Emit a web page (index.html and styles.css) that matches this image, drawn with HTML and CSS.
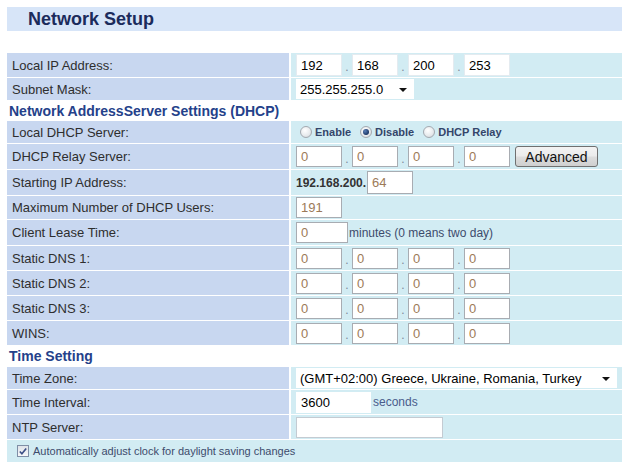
FILE: index.html
```html
<!DOCTYPE html>
<html>
<head>
<meta charset="utf-8">
<link rel="stylesheet" href="styles.css">
</head>
<body>
<div class="page">
  <div class="titlebar"><h1 class="title">Network Setup</h1></div>

  <div class="form">
    <div class="row r24">
      <div class="lbl">Local IP Address:</div>
      <div class="val">
        <input class="box oct" value="192"><span class="dot">.</span><input class="box oct" value="168"><span class="dot">.</span><input class="box oct" value="200"><span class="dot">.</span><input class="box oct" value="253">
      </div>
    </div>
    <div class="row r22">
      <div class="lbl">Subnet Mask:</div>
      <div class="val">
        <div class="select mask"><span>255.255.255.0</span><span class="arrow"></span></div>
      </div>
    </div>

    <div class="heading h21">Network AddressServer Settings (DHCP)</div>

    <div class="row r22">
      <div class="lbl">Local DHCP Server:</div>
      <div class="val radios">
        <span class="radio first"></span><span class="rtxt">Enable</span>
        <span class="radio on"></span><span class="rtxt">Disable</span>
        <span class="radio"></span><span class="rtxt">DHCP Relay</span>
      </div>
    </div>
    <div class="row r25">
      <div class="lbl">DHCP Relay Server:</div>
      <div class="val">
        <input class="box oct dis" value="0"><span class="dot">.</span><input class="box oct dis" value="0"><span class="dot">.</span><input class="box oct dis" value="0"><span class="dot">.</span><input class="box oct dis" value="0">
        <button class="btn">Advanced</button>
      </div>
    </div>
    <div class="row r25">
      <div class="lbl">Starting IP Address:</div>
      <div class="val">
        <span class="prefix">192.168.200.</span><input class="box oct dis tall" value="64">
      </div>
    </div>
    <div class="row r23">
      <div class="lbl">Maximum Number of DHCP Users:</div>
      <div class="val"><input class="box oct dis" value="191"></div>
    </div>
    <div class="row r25">
      <div class="lbl">Client Lease Time:</div>
      <div class="val"><input class="box lease dis" value="0"><span class="note">minutes (0 means two day)</span></div>
    </div>
    <div class="row r24">
      <div class="lbl">Static DNS 1:</div>
      <div class="val">
        <input class="box oct dis" value="0"><span class="dot">.</span><input class="box oct dis" value="0"><span class="dot">.</span><input class="box oct dis" value="0"><span class="dot">.</span><input class="box oct dis" value="0">
      </div>
    </div>
    <div class="row r24">
      <div class="lbl">Static DNS 2:</div>
      <div class="val">
        <input class="box oct dis" value="0"><span class="dot">.</span><input class="box oct dis" value="0"><span class="dot">.</span><input class="box oct dis" value="0"><span class="dot">.</span><input class="box oct dis" value="0">
      </div>
    </div>
    <div class="row r24">
      <div class="lbl">Static DNS 3:</div>
      <div class="val">
        <input class="box oct dis" value="0"><span class="dot">.</span><input class="box oct dis" value="0"><span class="dot">.</span><input class="box oct dis" value="0"><span class="dot">.</span><input class="box oct dis" value="0">
      </div>
    </div>
    <div class="row r24">
      <div class="lbl">WINS:</div>
      <div class="val">
        <input class="box oct dis" value="0"><span class="dot">.</span><input class="box oct dis" value="0"><span class="dot">.</span><input class="box oct dis" value="0"><span class="dot">.</span><input class="box oct dis" value="0">
      </div>
    </div>

    <div class="heading h22">Time Setting</div>

    <div class="row r22">
      <div class="lbl">Time Zone:</div>
      <div class="val">
        <div class="select tz"><span>(GMT+02:00) Greece, Ukraine, Romania, Turkey</span><span class="arrow"></span></div>
      </div>
    </div>
    <div class="row r24">
      <div class="lbl">Time Interval:</div>
      <div class="val"><input class="box interval" value="3600"><span class="note sec">seconds</span></div>
    </div>
    <div class="row r24">
      <div class="lbl">NTP Server:</div>
      <div class="val"><input class="box ntp" value=""></div>
    </div>
    <div class="full r22">
      <span class="check"><svg width="11" height="11" viewBox="0 0 11 11"><path d="M2 5.5 L4.3 8 L9 2.3" fill="none" stroke="#3d4f86" stroke-width="1.8"/></svg></span>
      <span class="ctxt">Automatically adjust clock for daylight saving changes</span>
    </div>
  </div>
</div>
</body>
</html>
```

FILE: styles.css
```css
* { box-sizing: border-box; }
html, body { margin: 0; padding: 0; background: #ffffff; }
body { font-family: "Liberation Sans", Arial, sans-serif; font-size: 13px; color: #303030; }

.page { padding: 7px 3px 0 7px; width: 625px; }

.titlebar {
  height: 24px;
  background: #d7e5f8;
  display: flex;
  align-items: center;
  padding-left: 21px;
}
.title {
  margin: 0;
  font-size: 18px;
  font-weight: bold;
  color: #1b2b5c;
  line-height: 24px;
}

.form { margin-top: 22px; display: flex; flex-direction: column; }

.row {
  display: grid;
  grid-template-columns: 282px 1fr;
  column-gap: 2px;
  margin-bottom: 1px;
}
.r21 { height: 21px; }
.r22 { height: 22px; }
.r23 { height: 23px; }
.r24 { height: 24px; }
.r25 { height: 25px; }
.h21 { height: 21px; }
.h22 { height: 22px; }

.lbl {
  background: #c8d7f0;
  padding-left: 5px;
  display: flex;
  align-items: center;
  font-size: 13px;
  color: #2e2e2e;
}
.val {
  background: #d2ecf3;
  padding-left: 5px;
  display: flex;
  align-items: center;
}

.heading {
  font-size: 14px;
  font-weight: bold;
  color: #24418a;
  padding-left: 2px;
  display: flex;
  align-items: center;
  margin-top: -1px;
}

.box {
  font-family: "Liberation Sans", Arial, sans-serif;
  font-size: 13px;
  color: #000;
  background: #fff;
  border: 1px solid #e4ebf0;
  height: 22px;
  padding: 0 0 0 4px;
  margin: 0;
  outline: none;
  border-radius: 0;
}
.box.dis { border-color: #a8acb2; color: #9c7a58; height: 21px; }
.box.tall { height: 23px; }
.oct { width: 46px; }
.lease { width: 52px; }
.interval { width: 75px; border-color: #ffffff; height: 21px; }
.ntp { width: 147px; border-color: #c4cbd2; height: 21px; }

.dot {
  width: 10px;
  text-align: center;
  align-self: flex-end;
  font-size: 12px;
  color: #7d8a98;
  padding-bottom: 3px;
}

.select {
  background: #fff;
  height: 20px;
  display: flex;
  align-items: center;
  justify-content: space-between;
  padding: 0 7px 0 4px;
  font-size: 13px;
  color: #000;
}
.mask { width: 118px; }
.tz { width: 321px; }
.arrow {
  width: 0; height: 0;
  border-left: 4px solid transparent;
  border-right: 4px solid transparent;
  border-top: 4px solid #111;
  margin-top: 2px;
}

.radios { font-size: 11px; font-weight: bold; color: #34456a; }
.radio {
  width: 12px; height: 12px;
  border-radius: 50%;
  border: 1px solid #a3a9b0;
  background: radial-gradient(circle at 40% 35%, #ffffff 0%, #e6e9ec 60%, #c9ced3 100%);
  margin: 0 3px 0 1px;
  display: inline-flex;
  align-items: center;
  justify-content: center;
}
.radio.first { margin-left: 4px; }
.radio.on::after {
  content: "";
  width: 6px; height: 6px;
  border-radius: 50%;
  background: radial-gradient(circle at 35% 35%, #5a7fb8 0%, #1c3664 70%);
}
.rtxt { margin-right: 8px; }

.btn {
  margin-left: 5px;
  width: 83px;
  height: 21px;
  font-family: "Liberation Sans", Arial, sans-serif;
  font-size: 14px;
  color: #111;
  border: 1px solid #707070;
  border-radius: 3px;
  background: linear-gradient(#f3f3f3 0%, #ebebeb 48%, #dddddd 52%, #cfcfcf 100%);
  padding: 0;
}

.prefix { font-size: 12px; font-weight: bold; color: #333; margin-right: 1px; }

.note { font-size: 12px; color: #3d4b6c; margin-left: 1px; }
.note.sec { color: #4a5c8c; margin-left: 2px; }

.full {
  background: #d2ecf3;
  display: flex;
  align-items: center;
  padding-left: 10px;
}
.check {
  width: 12px; height: 12px;
  border: 1px solid #7f8ea6;
  background: linear-gradient(#dfe3ea, #f6f7f9);
  display: inline-flex;
  align-items: center;
  justify-content: center;
  margin-right: 4px;
}
.ctxt { font-size: 11px; color: #3d4b6c; }
```
